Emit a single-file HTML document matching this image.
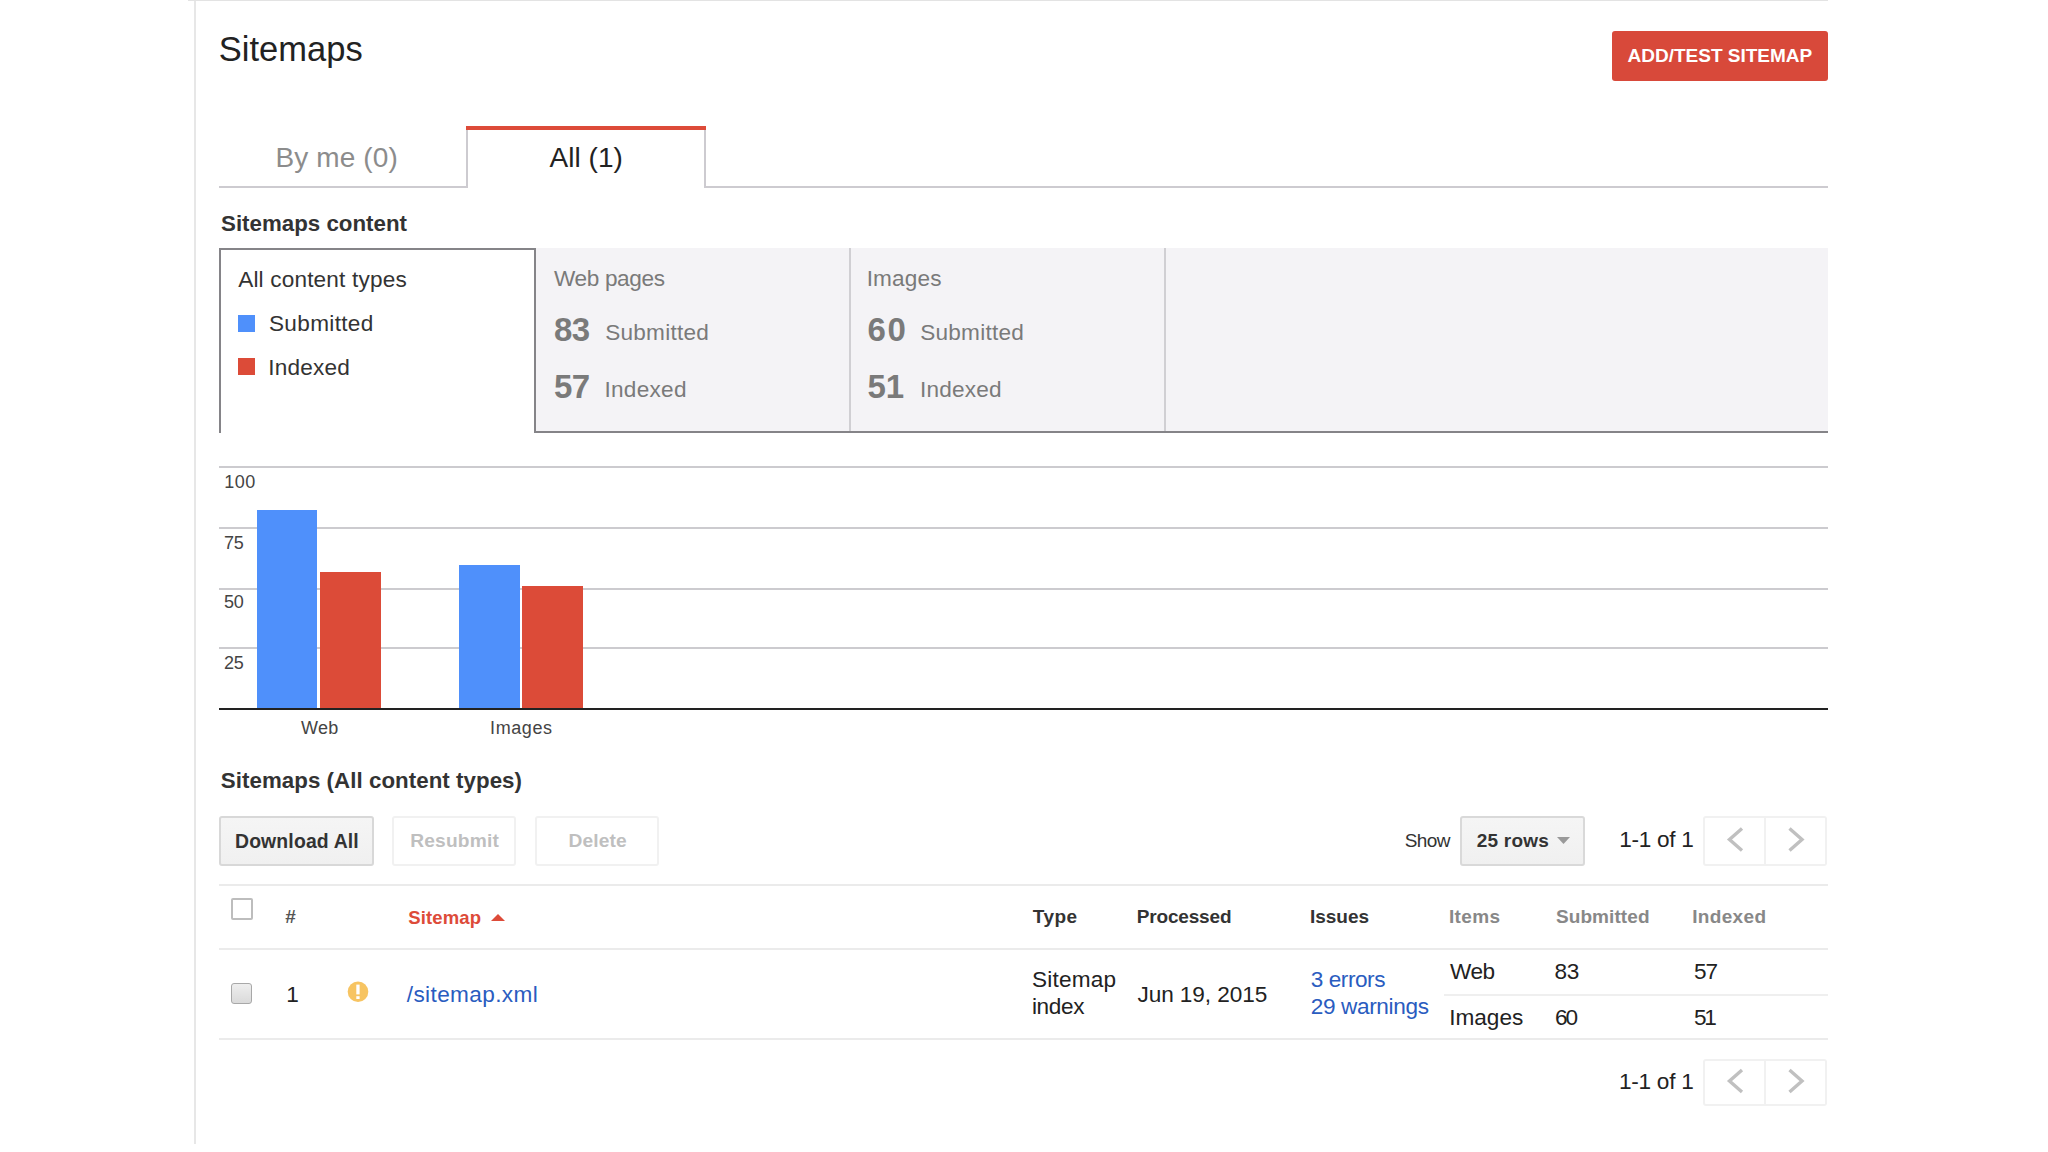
<!DOCTYPE html>
<html><head><meta charset="utf-8"><style>
html,body{margin:0;padding:0;background:#fff;}
body{width:2048px;height:1152px;position:relative;overflow:hidden;font-family:"Liberation Sans",sans-serif;}
.t{position:absolute;white-space:nowrap;line-height:normal;}
.b{position:absolute;}
</style></head><body>
<div class="b" style="left:194px;top:0px;width:2px;height:1144px;background:#e7e7e7"></div>
<div class="b" style="left:188px;top:0px;width:1640px;height:1px;background:#e3e3e3"></div>
<div id="t0" class="t" style="left:218.66px;top:30.48px;font-size:34.5px;color:#222;letter-spacing:0.046px;">Sitemaps</div>
<div class="b" style="left:1612px;top:31px;width:216px;height:50px;background:#d8493a;border-radius:3px"></div>
<div id="t1" class="t" style="left:1627.52px;top:44.80px;font-size:19px;color:#fff;font-weight:bold;letter-spacing:0.000px;">ADD/TEST SITEMAP</div>
<div class="b" style="left:219px;top:186px;width:247px;height:2px;background:#cdcbd0"></div>
<div class="b" style="left:704px;top:186px;width:1124px;height:2px;background:#cdcbd0"></div>
<div class="b" style="left:466px;top:126px;width:240px;height:62px;background:#fff;border-left:2px solid #cdcbd0;border-right:2px solid #cdcbd0;box-sizing:border-box;"></div>
<div class="b" style="left:466px;top:126px;width:240px;height:4px;background:#dd4b39"></div>
<div id="t2" class="t" style="left:275.40px;top:141.66px;font-size:28px;color:#8c8c8c;letter-spacing:0.131px;">By me (0)</div>
<div id="t3" class="t" style="left:549.50px;top:141.66px;font-size:28px;color:#222;letter-spacing:0.032px;">All (1)</div>
<div id="t4" class="t" style="left:221.00px;top:210.57px;font-size:22.3px;color:#333;font-weight:bold;letter-spacing:0.009px;">Sitemaps content</div>
<div class="b" style="left:534px;top:248px;width:1294px;height:185px;background:#f4f3f6"></div>
<div class="b" style="left:534px;top:431px;width:1294px;height:2px;background:#858488"></div>
<div class="b" style="left:219px;top:248px;width:317px;height:185px;background:#fff;border:2px solid #858488;border-bottom:none;box-sizing:border-box;"></div>
<div class="b" style="left:849px;top:248px;width:2px;height:183px;background:#d0cfd3"></div>
<div class="b" style="left:1164px;top:248px;width:2px;height:183px;background:#d0cfd3"></div>
<div id="t5" class="t" style="left:238.15px;top:267.35px;font-size:22.6px;color:#333;letter-spacing:0.173px;">All content types</div>
<div class="b" style="left:238px;top:315px;width:17px;height:17px;background:#4f90fb"></div>
<div class="b" style="left:238px;top:358px;width:17px;height:17px;background:#dc4b38"></div>
<div id="t6" class="t" style="left:268.96px;top:311.45px;font-size:22.6px;color:#333;letter-spacing:0.327px;">Submitted</div>
<div id="t7" class="t" style="left:268.16px;top:354.95px;font-size:22.6px;color:#333;letter-spacing:0.201px;">Indexed</div>
<div id="t8" class="t" style="left:554.04px;top:265.80px;font-size:22.6px;color:#7a7a7a;letter-spacing:-0.366px;">Web pages</div>
<div id="t9" class="t" style="left:553.96px;top:310.74px;font-size:33px;color:#7a7a7a;font-weight:bold;letter-spacing:-0.636px;">83</div>
<div id="t10" class="t" style="left:605.20px;top:320.15px;font-size:22.6px;color:#7a7a7a;letter-spacing:0.232px;">Submitted</div>
<div id="t11" class="t" style="left:553.96px;top:367.94px;font-size:33px;color:#7a7a7a;font-weight:bold;letter-spacing:-0.616px;">57</div>
<div id="t12" class="t" style="left:604.40px;top:377.35px;font-size:22.6px;color:#7a7a7a;letter-spacing:0.291px;">Indexed</div>
<div id="t13" class="t" style="left:866.64px;top:265.80px;font-size:22.6px;color:#7a7a7a;letter-spacing:0.181px;">Images</div>
<div id="t14" class="t" style="left:867.44px;top:310.74px;font-size:33px;color:#7a7a7a;font-weight:bold;letter-spacing:1.664px;">60</div>
<div id="t15" class="t" style="left:920.20px;top:320.15px;font-size:22.6px;color:#7a7a7a;letter-spacing:0.232px;">Submitted</div>
<div id="t16" class="t" style="left:867.44px;top:367.94px;font-size:33px;color:#7a7a7a;font-weight:bold;letter-spacing:-0.096px;">51</div>
<div id="t17" class="t" style="left:920.05px;top:377.35px;font-size:22.6px;color:#7a7a7a;letter-spacing:0.183px;">Indexed</div>
<div class="b" style="left:219px;top:466px;width:1609px;height:2px;background:#cccbcf"></div>
<div class="b" style="left:219px;top:527px;width:1609px;height:2px;background:#cccbcf"></div>
<div class="b" style="left:219px;top:588px;width:1609px;height:2px;background:#cccbcf"></div>
<div class="b" style="left:219px;top:647px;width:1609px;height:2px;background:#cccbcf"></div>
<div class="b" style="left:219px;top:708px;width:1609px;height:2px;background:#222"></div>
<div class="b" style="left:257px;top:510px;width:60px;height:198px;background:#4f90fb"></div>
<div class="b" style="left:320px;top:572px;width:61px;height:136px;background:#dc4b38"></div>
<div class="b" style="left:459px;top:565px;width:61px;height:143px;background:#4f90fb"></div>
<div class="b" style="left:522px;top:586px;width:61px;height:122px;background:#dc4b38"></div>
<div id="t18" class="t" style="left:224.20px;top:472.21px;font-size:18px;color:#444;letter-spacing:0.528px;">100</div>
<div id="t19" class="t" style="left:223.98px;top:533.21px;font-size:18px;color:#444;letter-spacing:-0.256px;">75</div>
<div id="t20" class="t" style="left:223.98px;top:591.71px;font-size:18px;color:#444;letter-spacing:-0.256px;">50</div>
<div id="t21" class="t" style="left:223.98px;top:653.21px;font-size:18px;color:#444;letter-spacing:-0.256px;">25</div>
<div id="t22" class="t" style="left:301.00px;top:717.51px;font-size:18px;color:#444;letter-spacing:0.278px;">Web</div>
<div id="t23" class="t" style="left:490.05px;top:717.51px;font-size:18px;color:#444;letter-spacing:0.590px;">Images</div>
<div id="t24" class="t" style="left:220.85px;top:767.82px;font-size:22.3px;color:#333;font-weight:bold;letter-spacing:0.048px;">Sitemaps (All content types)</div>
<div class="b" style="left:219px;top:816px;width:155px;height:50px;background:linear-gradient(#f5f5f5,#f0f0f0);border:2px solid #d8d8d8;border-radius:3px;box-sizing:border-box;"></div>
<div id="t25" class="t" style="left:234.98px;top:829.74px;font-size:19.4px;color:#333;font-weight:bold;letter-spacing:0.153px;">Download All</div>
<div class="b" style="left:392px;top:816px;width:124px;height:50px;border:2px solid #f1f1f1;border-radius:3px;box-sizing:border-box;"></div>
<div id="t26" class="t" style="left:410.20px;top:829.92px;font-size:19.2px;color:#bfbfbf;font-weight:bold;letter-spacing:0.192px;">Resubmit</div>
<div class="b" style="left:535px;top:816px;width:124px;height:50px;border:2px solid #f1f1f1;border-radius:3px;box-sizing:border-box;"></div>
<div id="t27" class="t" style="left:568.42px;top:829.92px;font-size:19.2px;color:#bfbfbf;font-weight:bold;letter-spacing:0.152px;">Delete</div>
<div id="t28" class="t" style="left:1404.72px;top:830.00px;font-size:19px;color:#333;letter-spacing:-0.619px;">Show</div>
<div class="b" style="left:1460px;top:816px;width:125px;height:50px;background:linear-gradient(#f5f5f5,#f0f0f0);border:2px solid #d9d9d9;border-radius:3px;box-sizing:border-box;"></div>
<div id="t29" class="t" style="left:1476.74px;top:829.80px;font-size:19px;color:#333;font-weight:bold;letter-spacing:0.211px;">25 rows</div>
<svg class="b" style="left:1557px;top:837px" width="13" height="7"><path d="M0 0H13L6.5 7Z" fill="#999"/></svg>
<div id="t30" class="t" style="left:1619.18px;top:827.15px;font-size:22.6px;color:#222;letter-spacing:-0.291px;">1-1 of 1</div>
<div class="b" style="left:1703px;top:816px;width:63px;height:50px;border:2px solid #f1f1f1;border-radius:3px 0 0 3px;box-sizing:border-box;"></div>
<div class="b" style="left:1766px;top:816px;width:61px;height:50px;border:2px solid #f1f1f1;border-left:none;border-radius:0 3px 3px 0;box-sizing:border-box;"></div>
<svg class="b" style="left:1720px;top:816px" width="30" height="50"><path d="M22 12.5 L9.5 23.5 L22 34.5" stroke="#c0c0c0" stroke-width="3.4" fill="none"/></svg>
<svg class="b" style="left:1780px;top:816px" width="30" height="50"><path d="M9.5 12.5 L22 23.5 L9.5 34.5" stroke="#c0c0c0" stroke-width="3.4" fill="none"/></svg>
<div class="b" style="left:219px;top:884px;width:1609px;height:2px;background:#ebebeb"></div>
<div class="b" style="left:231px;top:898px;width:22px;height:22px;border:2px solid #bdbdbd;border-radius:2px;background:#fff;box-sizing:border-box;"></div>
<div id="t31" class="t" style="left:285.28px;top:906.30px;font-size:19px;color:#555;font-weight:bold;letter-spacing:0.000px;">#</div>
<div id="t32" class="t" style="left:408.35px;top:906.66px;font-size:18.5px;color:#dd4b39;font-weight:bold;letter-spacing:0.117px;">Sitemap</div>
<svg class="b" style="left:491px;top:914px" width="14" height="7"><path d="M0 7H14L7 0Z" fill="#dd4b39"/></svg>
<div id="t33" class="t" style="left:1032.76px;top:905.90px;font-size:19px;color:#333;font-weight:bold;letter-spacing:0.433px;">Type</div>
<div id="t34" class="t" style="left:1136.70px;top:905.90px;font-size:19px;color:#333;font-weight:bold;letter-spacing:-0.160px;">Processed</div>
<div id="t35" class="t" style="left:1309.96px;top:905.90px;font-size:19px;color:#333;font-weight:bold;letter-spacing:-0.021px;">Issues</div>
<div id="t36" class="t" style="left:1448.96px;top:906.30px;font-size:19px;color:#888;font-weight:bold;letter-spacing:0.358px;">Items</div>
<div id="t37" class="t" style="left:1555.98px;top:906.30px;font-size:19px;color:#888;font-weight:bold;letter-spacing:0.084px;">Submitted</div>
<div id="t38" class="t" style="left:1692.18px;top:906.30px;font-size:19px;color:#888;font-weight:bold;letter-spacing:0.340px;">Indexed</div>
<div class="b" style="left:219px;top:948px;width:1609px;height:2px;background:#ebebeb"></div>
<div class="b" style="left:231px;top:983px;width:21px;height:21px;background:linear-gradient(#eeeeee,#dadada);border:1.5px solid #a8a8a8;border-radius:3px;box-sizing:border-box;"></div>
<div id="t39" class="t" style="left:286.20px;top:981.75px;font-size:22.6px;color:#222;letter-spacing:0.000px;">1</div>
<svg class="b" style="left:347px;top:981px" width="22" height="22"><circle cx="11" cy="10.8" r="10.3" fill="#f7c462"/><rect x="9.3" y="3.6" width="3.3" height="9.8" fill="#fff"/><rect x="9.3" y="15.2" width="3.3" height="2.8" fill="#fff"/></svg>
<div id="t40" class="t" style="left:406.76px;top:981.75px;font-size:22.6px;color:#2a5cc0;letter-spacing:0.384px;">/sitemap.xml</div>
<div id="t41" class="t" style="left:1031.96px;top:967.35px;font-size:22.6px;color:#222;letter-spacing:0.194px;">Sitemap</div>
<div id="t42" class="t" style="left:1031.96px;top:993.65px;font-size:22.6px;color:#222;letter-spacing:-0.369px;">index</div>
<div id="t43" class="t" style="left:1137.50px;top:981.55px;font-size:22.6px;color:#222;letter-spacing:-0.083px;">Jun 19, 2015</div>
<div id="t44" class="t" style="left:1310.70px;top:967.35px;font-size:22.6px;color:#2a5cc0;letter-spacing:-0.434px;">3 errors</div>
<div id="t45" class="t" style="left:1310.70px;top:993.65px;font-size:22.6px;color:#2a5cc0;letter-spacing:-0.356px;">29 warnings</div>
<div id="t46" class="t" style="left:1450.00px;top:958.95px;font-size:22.6px;color:#222;letter-spacing:-0.529px;">Web</div>
<div id="t47" class="t" style="left:1554.46px;top:958.95px;font-size:22.6px;color:#222;letter-spacing:-0.291px;">83</div>
<div id="t48" class="t" style="left:1693.98px;top:958.95px;font-size:22.6px;color:#222;letter-spacing:-1.091px;">57</div>
<div class="b" style="left:1444px;top:994px;width:384px;height:2px;background:#efefef"></div>
<div id="t49" class="t" style="left:1449.16px;top:1004.65px;font-size:22.6px;color:#222;letter-spacing:-0.001px;">Images</div>
<div id="t50" class="t" style="left:1555.00px;top:1004.65px;font-size:22.6px;color:#222;letter-spacing:-2.111px;">60</div>
<div id="t51" class="t" style="left:1693.98px;top:1004.65px;font-size:22.6px;color:#222;letter-spacing:-2.331px;">51</div>
<div class="b" style="left:219px;top:1038px;width:1609px;height:2px;background:#ebebeb"></div>
<div id="t52" class="t" style="left:1618.92px;top:1068.65px;font-size:22.6px;color:#222;letter-spacing:-0.254px;">1-1 of 1</div>
<div class="b" style="left:1703px;top:1059px;width:63px;height:47px;border:2px solid #f1f1f1;border-radius:3px 0 0 3px;box-sizing:border-box;"></div>
<div class="b" style="left:1766px;top:1059px;width:61px;height:47px;border:2px solid #f1f1f1;border-left:none;border-radius:0 3px 3px 0;box-sizing:border-box;"></div>
<svg class="b" style="left:1720px;top:1059px" width="30" height="47"><path d="M22 11.0 L9.5 22.0 L22 33.0" stroke="#c0c0c0" stroke-width="3.4" fill="none"/></svg>
<svg class="b" style="left:1780px;top:1059px" width="30" height="47"><path d="M9.5 11.0 L22 22.0 L9.5 33.0" stroke="#c0c0c0" stroke-width="3.4" fill="none"/></svg>
</body></html>
